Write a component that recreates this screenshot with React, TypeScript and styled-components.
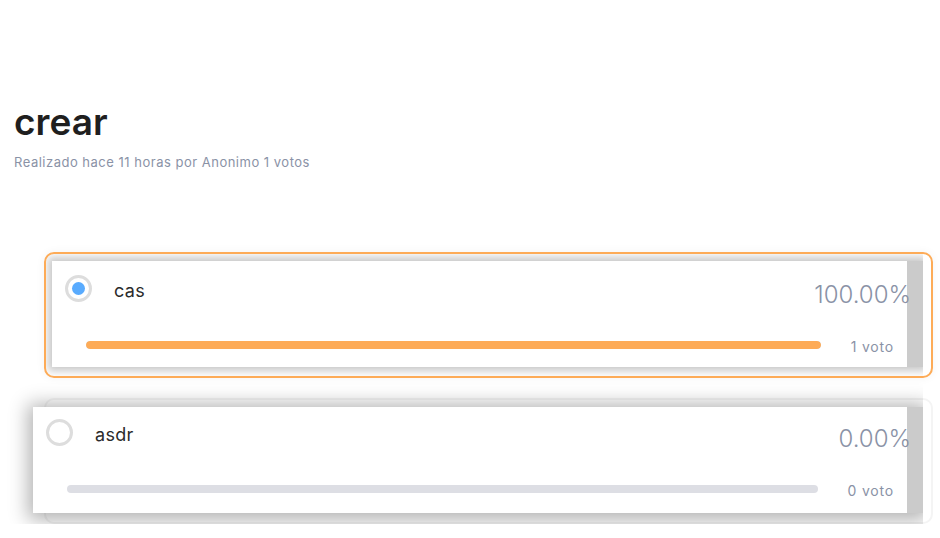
import React from "react";
import styled, { createGlobalStyle, css } from "styled-components";

const Global = createGlobalStyle`
  html, body { margin: 0; padding: 0; background: #ffffff; }
  body { font-family: Inter, "Noto Sans", sans-serif; color: #222; }
`;

const Page = styled.div`
  padding: 98px 7px 0 14px;
`;

const Title = styled.h1`
  margin: 0;
  font-size: 37px;
  line-height: 48px;
  font-weight: 600;
  color: #1f1f1f;
  letter-spacing: 0;
`;

const Meta = styled.div`
  margin-top: 8px;
  font-size: 13px;
  line-height: 16px;
  color: #8a92a6;
  letter-spacing: 0.5px;
`;

const OptionList = styled.div`
  margin: 82px 0 0 30px;
  display: flex;
  flex-direction: column;
  gap: 20px;
`;

const Frame = styled.div<{ $selected: boolean }>`
  height: 126px;
  box-sizing: border-box;
  border-radius: 10px;
  border: 2px solid ${(p) => (p.$selected ? "#fdab57" : "#f4f4f4")};
  box-shadow: ${(p) => (p.$selected ? "0 0 10px rgba(0,0,0,0.05)" : "none")};
  padding-right: 8px;
  display: flex;
`;

const Clip = styled.div<{ $selected: boolean }>`
  flex: 1;
  display: flex;
  ${(p) =>
    p.$selected &&
    css`
      overflow: hidden;
      border-radius: 8px 0 0 8px;
    `}
`;

const Card = styled.div<{ $selected: boolean }>`
  position: relative;
  flex: 1;
  height: 106px;
  margin-top: 7px;
  margin-left: ${(p) => (p.$selected ? "6px" : "-13px")};
  background: #ffffff;
  box-sizing: border-box;
  box-shadow: ${(p) =>
    p.$selected
      ? "0 0 8px 4px rgba(0,0,0,0.22)"
      : "0 2px 18px 5px rgba(0,0,0,0.3)"};
  clip-path: inset(-40px 0 -40px -40px);
  padding: ${(p) => (p.$selected ? "14px 12px 0 13px" : "12px 12px 0 13px")};
`;

const Rail = styled.div`
  position: absolute;
  top: 0;
  right: 0;
  bottom: 0;
  width: 16px;
  background: #cbcbcb;
`;

const TopRow = styled.div`
  position: relative;
  display: flex;
  align-items: center;
  height: 27px;
`;

const Radio = styled.span<{ $checked: boolean }>`
  width: 27px;
  height: 27px;
  box-sizing: border-box;
  border-radius: 50%;
  border: 3px solid #dddddd;
  background: #fff;
  display: flex;
  align-items: center;
  justify-content: center;
  flex: none;
  &::after {
    content: "";
    width: 13px;
    height: 13px;
    border-radius: 50%;
    background: ${(p) => (p.$checked ? "#59abfe" : "transparent")};
  }
`;

const Label = styled.span`
  margin-left: 22px;
  font-size: 18px;
  color: #2b2b2b;
  margin-top: 4px;
  letter-spacing: 0.3px;
`;

const Percent = styled.span`
  margin-left: auto;
  font-size: 24px;
  font-weight: 300;
  color: #8a92a6;
  margin-top: 11px;
  letter-spacing: 0;
`;

const BottomRow = styled.div`
  position: relative;
  display: flex;
  align-items: center;
  gap: 30px;
  margin-top: 34px;
  padding: 0 17px 0 21px;
  height: 18px;
`;

const Track = styled.div`
  flex: 1;
  height: 8px;
  border-radius: 4px;
  background: #dddee4;
  overflow: hidden;
`;

const Fill = styled.div`
  height: 100%;
  border-radius: 4px;
  background: #fdab57;
`;

const Votes = styled.span`
  font-size: 14px;
  color: #8a92a6;
  margin-top: 2px;
  letter-spacing: 0.8px;
`;

type Option = { label: string; votes: number; pct: number; selected: boolean };

const options: Option[] = [
  { label: "cas", votes: 1, pct: 100, selected: true },
  { label: "asdr", votes: 0, pct: 0, selected: false },
];

export default function App() {
  return (
    <>
      <Global />
      <Page>
        <Title>crear</Title>
        <Meta>Realizado hace 11 horas por Anonimo 1 votos</Meta>
        <OptionList>
          {options.map((o) => (
            <Frame key={o.label} $selected={o.selected}>
              <Clip $selected={o.selected}>
                <Card $selected={o.selected}>
                  <Rail />
                  <TopRow>
                    <Radio $checked={o.selected} />
                    <Label>{o.label}</Label>
                    <Percent>{o.pct.toFixed(2)}%</Percent>
                  </TopRow>
                  <BottomRow>
                    <Track>
                      <Fill style={{ width: `${o.pct}%` }} />
                    </Track>
                    <Votes>{o.votes} voto</Votes>
                  </BottomRow>
                </Card>
              </Clip>
            </Frame>
          ))}
        </OptionList>
      </Page>
    </>
  );
}
